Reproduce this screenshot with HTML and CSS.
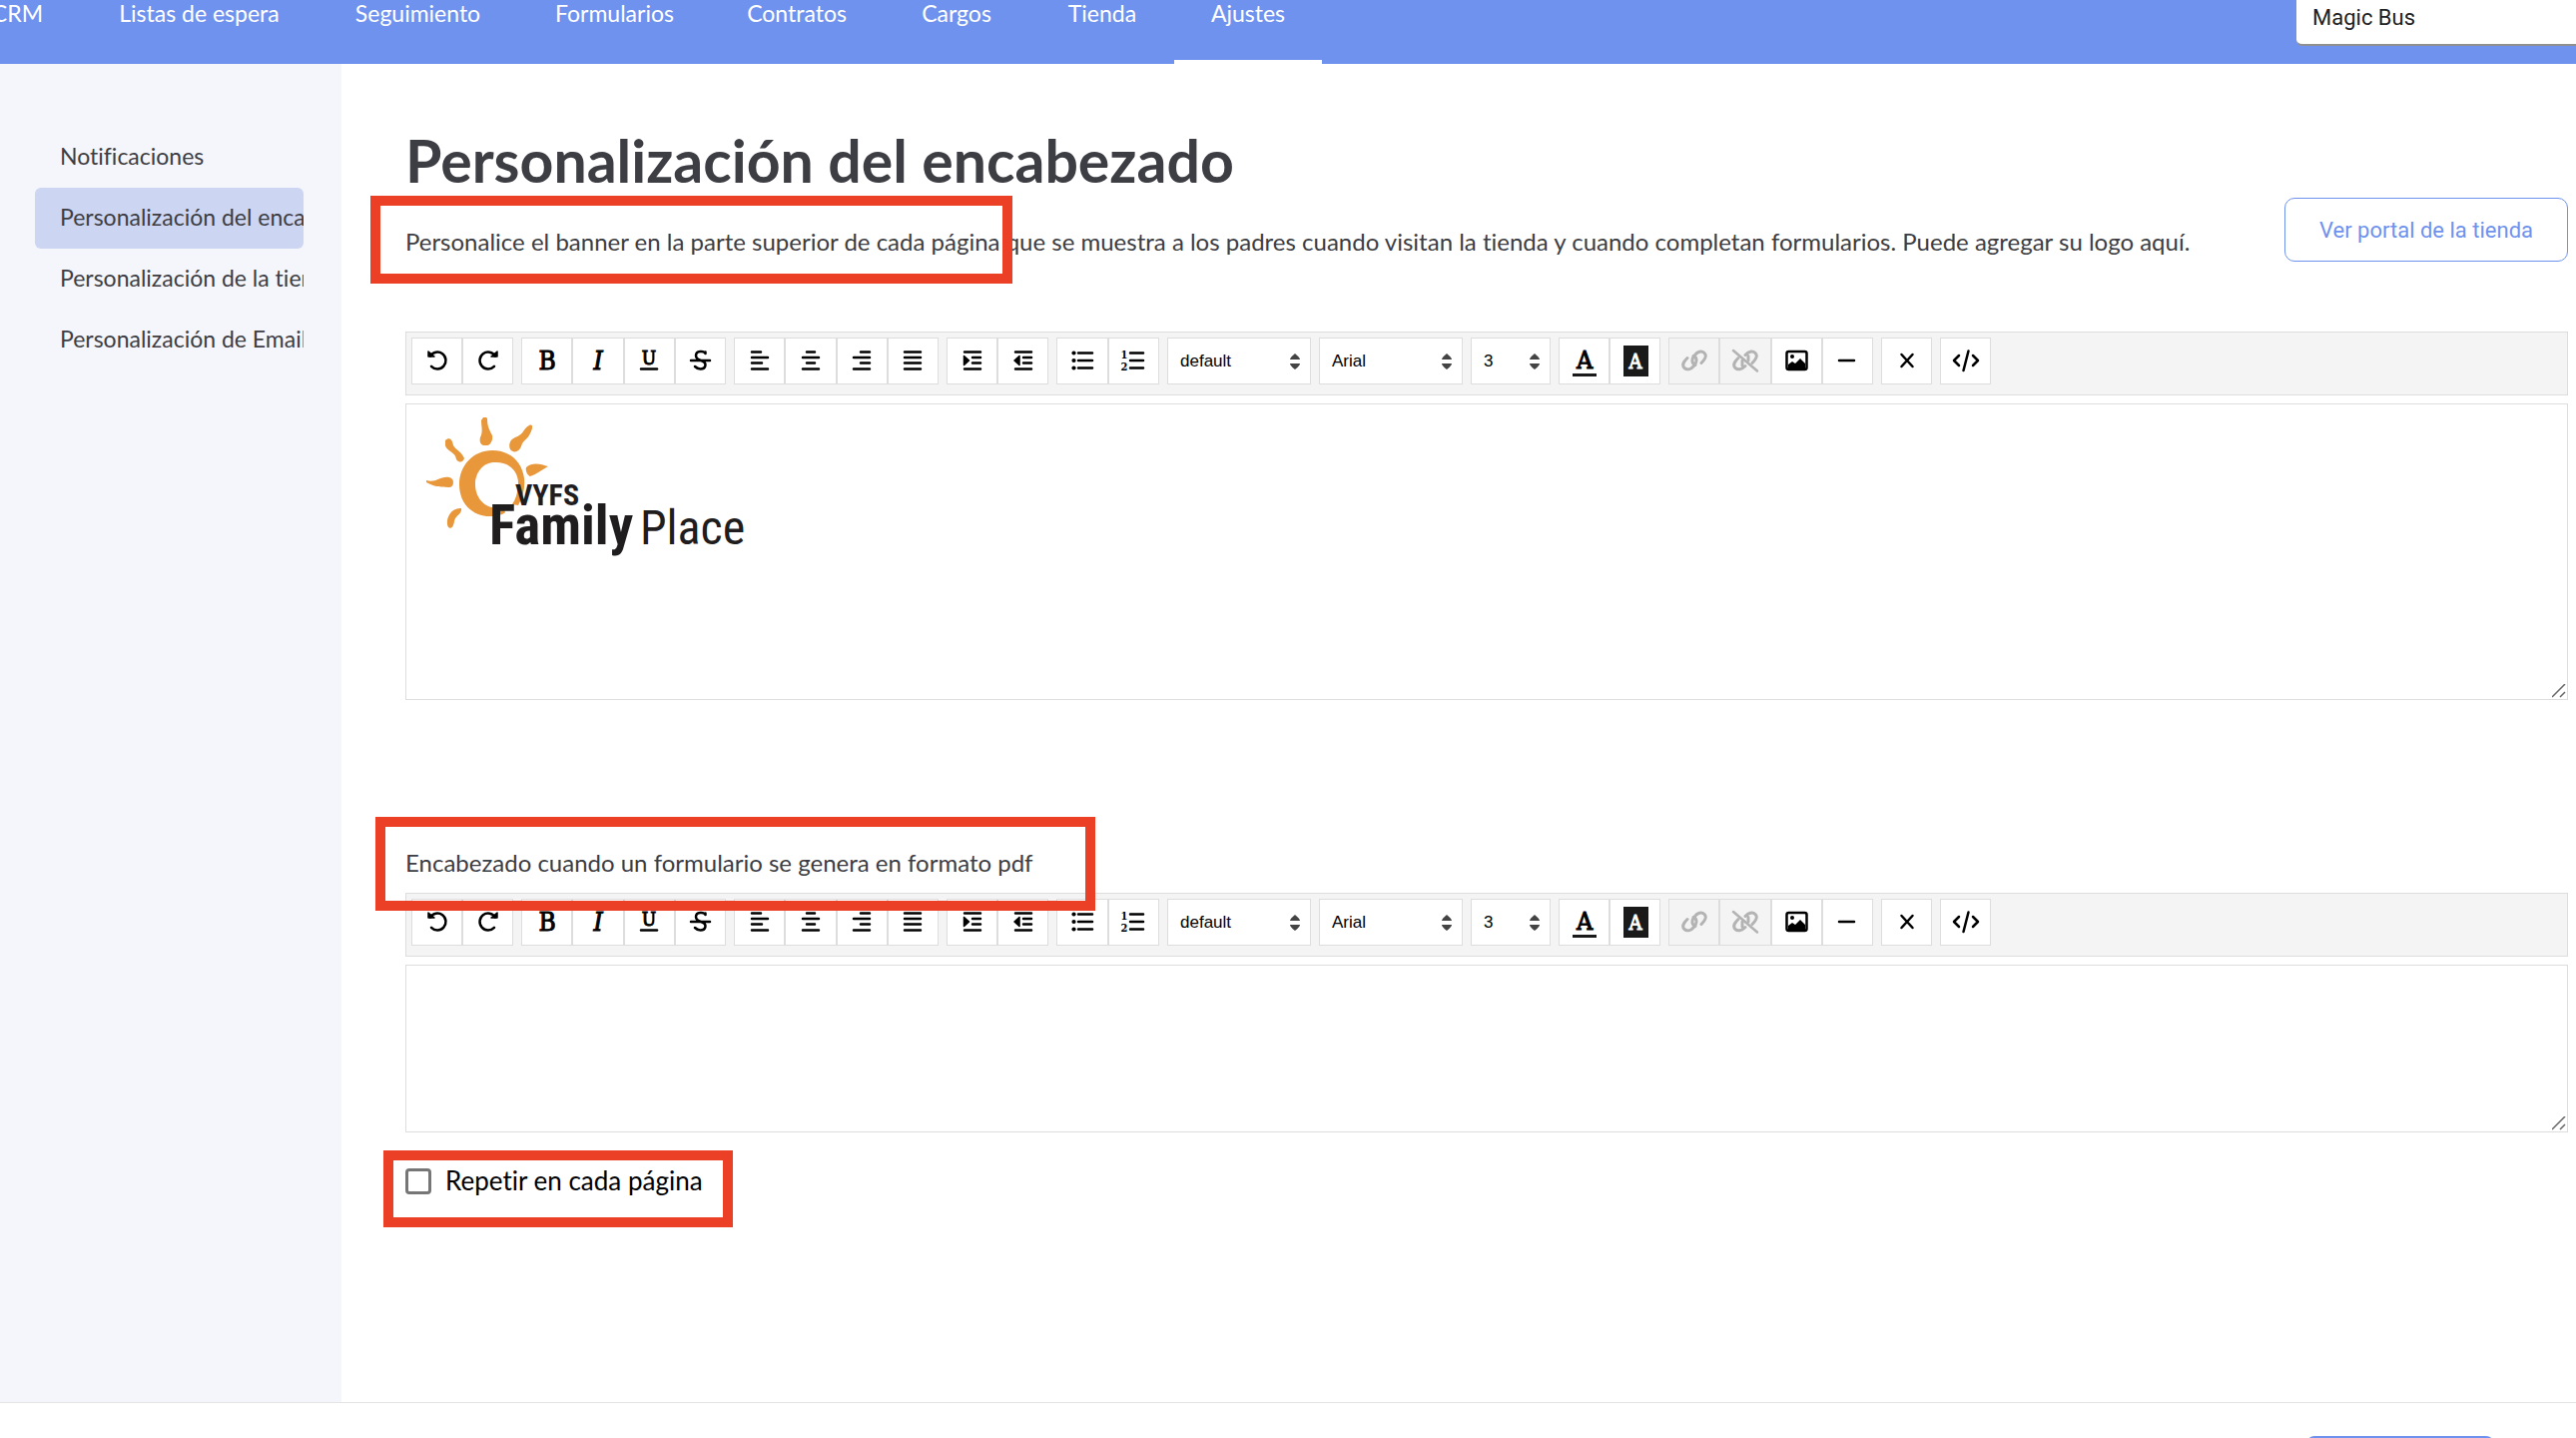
FILE: index.html
```html
<!DOCTYPE html>
<html lang="es">
<head>
<meta charset="utf-8">
<meta name="viewport" content="width=device-width, initial-scale=1">
<title>Personalización del encabezado</title>
<link rel="stylesheet" href="styles.css">
</head>
<body>
<svg class="sprite" aria-hidden="true">
  <symbol id="i-undo" viewBox="0 0 30 34"><path d="M8 12.500A8.400 8.400 0 1 1 9 22.800" class="ln"/><path d="M6 8v5h6z" class="fl"/></symbol>
  <symbol id="i-redo" viewBox="0 0 30 34"><path d="M22 12.500A8.400 8.400 0 1 0 21 22.800" class="ln"/><path d="M24 8v5h-6z" class="fl"/></symbol>
  <symbol id="i-bold" viewBox="0 0 30 34"><text x="15" y="26" class="glyph" font-size="26">B</text></symbol>
  <symbol id="i-italic" viewBox="0 0 30 34"><text x="15" y="26" class="glyph glyph-it" font-size="26">I</text></symbol>
  <symbol id="i-under" viewBox="0 0 30 34"><text x="15" y="21" class="glyph" font-size="19">U</text><path d="M7 25.500h16" class="ln"/></symbol>
  <symbol id="i-strike" viewBox="0 0 30 34"><path d="M20.500 10V8.500M20.500 10C19 7 11 7 11 12C11 14.500 13 16 16 17C23 19 21 25.500 15.500 25.500C12.500 25.500 11 24 10 23M6 17h19" class="ln"/></symbol>
  <symbol id="i-left" viewBox="0 0 30 34"><path d="M7 8.500h9M7 14h16M7 19.500h10M7 25.500h16" class="ln"/></symbol>
  <symbol id="i-center" viewBox="0 0 30 34"><path d="M11 8.500h8M7 14h16M11 19.500h8M7 25.500h16" class="ln"/></symbol>
  <symbol id="i-right" viewBox="0 0 30 34"><path d="M14 8.500h9M7 14h16M14 19.500h9M7 25.500h16" class="ln"/></symbol>
  <symbol id="i-justify" viewBox="0 0 30 34"><path d="M7 8.500h16M7 14h16M7 19.500h16M7 25.500h16" class="ln"/></symbol>
  <symbol id="i-indent" viewBox="0 0 30 34"><path d="M7 8.500h16M15 14h8M15 19.500h8M7 25.500h16" class="ln"/><path d="M6.500 12.500v9l5-4.500z" class="fl"/></symbol>
  <symbol id="i-outdent" viewBox="0 0 30 34"><path d="M7 8.500h16M15 14h8M15 19.500h8M7 25.500h16" class="ln"/><path d="M11 12.500v9l-5-4.500z" class="fl"/></symbol>
  <symbol id="i-ul" viewBox="0 0 30 34"><path d="M11 9.500h14M11 17h14M11 24.500h14" class="ln"/><circle cx="6.500" cy="9.500" r="2.100"/><circle cx="6.500" cy="17" r="2.100"/><circle cx="6.500" cy="24.500" r="2.100"/></symbol>
  <symbol id="i-ol" viewBox="0 0 30 34"><path d="M12 9.500h13M12 17h13M12 24.500h13" class="ln"/><text x="6" y="15" class="num">1</text><text x="6" y="27" class="num">2</text></symbol>
  <symbol id="i-color" viewBox="0 0 30 34"><text x="15" y="25" class="glyph" font-size="25">A</text><path d="M3 30h24v3H3z" fill="#1a1a1a"/></symbol>
  <symbol id="i-fill" viewBox="0 0 30 34"><path d="M3 2h25v31H3z" fill="#1a1a1a"/><text x="15" y="25" class="glyph glyph-inv" font-size="20">A</text></symbol>
  <symbol id="i-link" viewBox="0 0 30 34"><path d="M16 21.500C11.500 20 12.500 14.500 15.500 11.500C18 8.500 22 6.500 25 9.500C28 12.500 25.500 16 22 19.500M14 12.500C18.500 14 17.500 19.500 14.500 22.500C12 25.500 8 27 5 24.500C2 21.500 4.500 18 8 14.500" class="ln ln-bold"/></symbol>
  <symbol id="i-unlink" viewBox="0 0 30 34"><path d="M15 11.500C18 8.500 22 6.500 25 9.500C28 12.500 25.500 16 22 19.500M18 12.500V17M15 22.500C12 25.500 8 27 5 24.500C2 21.500 4.500 18 8 14.500M12 17V22" class="ln ln-bold"/><path d="M3 7L27 27.500" class="ln"/></symbol>
  <symbol id="i-image" viewBox="0 0 30 34"><rect x="5.500" y="8" width="20" height="18" rx="2" class="ln"/><circle cx="11" cy="13" r="2"/><path d="M7 25v-4l4-3 3 2 5-5 5 5v5z"/></symbol>
  <symbol id="i-rule" viewBox="0 0 30 34"><path d="M7 17h15" class="ln"/></symbol>
  <symbol id="i-clear" viewBox="0 0 30 34"><path d="M9.500 11l11 12M20.500 11l-11 12" class="ln"/></symbol>
  <symbol id="i-code" viewBox="0 0 30 34"><path d="M8 12l-5 5 5 5M22 12l5 5-5 5M17.500 7.500L12.500 27" class="ln"/></symbol>
</svg>

<div class="app">
  <header class="topbar">
    <nav class="nav" aria-label="Principal">
      <a href="#" class="nav-first">CRM</a>
      <a href="#">Listas de espera</a>
      <a href="#">Seguimiento</a>
      <a href="#">Formularios</a>
      <a href="#">Contratos</a>
      <a href="#">Cargos</a>
      <a href="#">Tienda</a>
      <a href="#" class="current" aria-current="page">Ajustes</a>
    </nav>
    <select class="center-select" aria-label="Centro"><option>Magic Bus</option></select>
  </header>

  <div class="layout">
    <aside class="sidebar">
      <a href="#">Notificaciones</a>
      <a href="#" class="active">Personalización del encabezado</a>
      <a href="#">Personalización de la tienda</a>
      <a href="#">Personalización de Email</a>
    </aside>

    <main class="content">
      <h1>Personalización del encabezado</h1>
      <div class="intro">
        <p class="lead">Personalice el banner en la parte superior de cada página que se muestra a los padres cuando visitan la tienda y cuando completan formularios. Puede agregar su logo aquí.<span class="mark mark-intro"></span></p>
        <button type="button" class="outline-btn">Ver portal de la tienda</button>
      </div>

      <section class="editor">
        <div class="toolbar">
          <div class="group"><button type="button" aria-label="Deshacer"><svg><use href="#i-undo"/></svg></button><button type="button" aria-label="Rehacer"><svg><use href="#i-redo"/></svg></button></div>
          <div class="group"><button type="button" aria-label="Negrita"><svg><use href="#i-bold"/></svg></button><button type="button" aria-label="Cursiva"><svg><use href="#i-italic"/></svg></button><button type="button" aria-label="Subrayado"><svg><use href="#i-under"/></svg></button><button type="button" aria-label="Tachado"><svg><use href="#i-strike"/></svg></button></div>
          <div class="group"><button type="button" aria-label="Alinear a la izquierda"><svg><use href="#i-left"/></svg></button><button type="button" aria-label="Centrar"><svg><use href="#i-center"/></svg></button><button type="button" aria-label="Alinear a la derecha"><svg><use href="#i-right"/></svg></button><button type="button" aria-label="Justificar"><svg><use href="#i-justify"/></svg></button></div>
          <div class="group"><button type="button" aria-label="Aumentar sangría"><svg><use href="#i-indent"/></svg></button><button type="button" aria-label="Reducir sangría"><svg><use href="#i-outdent"/></svg></button></div>
          <div class="group"><button type="button" aria-label="Lista con viñetas"><svg><use href="#i-ul"/></svg></button><button type="button" aria-label="Lista numerada"><svg><use href="#i-ol"/></svg></button></div>
          <select aria-label="Estilo"><option>default</option></select>
          <select aria-label="Fuente"><option>Arial</option></select>
          <select aria-label="Tamaño"><option>3</option></select>
          <div class="group"><button type="button" aria-label="Color de texto"><svg><use href="#i-color"/></svg></button><button type="button" aria-label="Color de fondo"><svg><use href="#i-fill"/></svg></button></div>
          <div class="group"><button type="button" aria-label="Enlace" disabled><svg><use href="#i-link"/></svg></button><button type="button" aria-label="Quitar enlace" disabled><svg><use href="#i-unlink"/></svg></button><button type="button" aria-label="Imagen"><svg><use href="#i-image"/></svg></button><button type="button" aria-label="Línea horizontal"><svg><use href="#i-rule"/></svg></button></div>
          <div class="group"><button type="button" aria-label="Borrar formato"><svg><use href="#i-clear"/></svg></button></div>
          <div class="group"><button type="button" aria-label="Código"><svg><use href="#i-code"/></svg></button></div>
        </div>
        <div class="canvas canvas-tall" contenteditable="true" spellcheck="false" role="textbox" aria-label="Encabezado"><svg class="logo" viewBox="0 0 322 142" role="img" aria-label="VYFS Family Place">
          <g fill="#e8983a">
            <path fill-rule="evenodd" d="M92 88C97 80 99 70 98 61C96 44 83 33 66 33C47 33 33 48 33 67C33 87 47 100 66 99C72 98 78 97 79 95L77 90C62 94 49 83 49 67C49 54 58 44 70 45C84 45 93 55 92 68Q91 80 86 87Z"/>
            <path d="M55 3Q58-3 61 1C61 9 63 12 66 18C67 23 64 29 59 28C54 28 53 24 54 20C57 14 55 9 55 3Z"/>
            <path d="M103 8C107 6 107 11 104 16C101 23 97 22 95 29C93 35 87 36 84 32C82 27 84 22 89 20C98 17 97 11 103 8Z"/>
            <path d="M19 23C23 19 26 22 27 28C29 32 36 35 38 41C37 45 33 46 30 42C29 34 20 34 19 28Z"/>
            <path d="M0 63C10 66 14 58 23 60C29 61 28 71 22 70C14 69 12 71 0 65Z"/>
            <path d="M100 50C107 44 115 47 122 49C115 53 110 57 104 59C101 58 99 53 100 50Z"/>
            <path d="M35 91C36 97 29 98 28 104C27 112 22 113 21 107C20 99 26 90 35 91Z"/>
          </g>
          <g fill="#1f1d1e">
            <text x="89" y="88" class="logo-top">VYFS</text>
            <text x="63" y="127" class="logo-bold">Family</text>
            <text x="214" y="127" class="logo-thin">Place</text>
          </g>
        </svg></div>
      </section>

      <section class="editor editor-pdf">
        <label class="lead pdf-label" for="pdf-header">Encabezado cuando un formulario se genera en formato pdf<span class="mark mark-pdf"></span></label>
        <div class="toolbar">
          <div class="group"><button type="button" aria-label="Deshacer"><svg><use href="#i-undo"/></svg></button><button type="button" aria-label="Rehacer"><svg><use href="#i-redo"/></svg></button></div>
          <div class="group"><button type="button" aria-label="Negrita"><svg><use href="#i-bold"/></svg></button><button type="button" aria-label="Cursiva"><svg><use href="#i-italic"/></svg></button><button type="button" aria-label="Subrayado"><svg><use href="#i-under"/></svg></button><button type="button" aria-label="Tachado"><svg><use href="#i-strike"/></svg></button></div>
          <div class="group"><button type="button" aria-label="Alinear a la izquierda"><svg><use href="#i-left"/></svg></button><button type="button" aria-label="Centrar"><svg><use href="#i-center"/></svg></button><button type="button" aria-label="Alinear a la derecha"><svg><use href="#i-right"/></svg></button><button type="button" aria-label="Justificar"><svg><use href="#i-justify"/></svg></button></div>
          <div class="group"><button type="button" aria-label="Aumentar sangría"><svg><use href="#i-indent"/></svg></button><button type="button" aria-label="Reducir sangría"><svg><use href="#i-outdent"/></svg></button></div>
          <div class="group"><button type="button" aria-label="Lista con viñetas"><svg><use href="#i-ul"/></svg></button><button type="button" aria-label="Lista numerada"><svg><use href="#i-ol"/></svg></button></div>
          <select aria-label="Estilo"><option>default</option></select>
          <select aria-label="Fuente"><option>Arial</option></select>
          <select aria-label="Tamaño"><option>3</option></select>
          <div class="group"><button type="button" aria-label="Color de texto"><svg><use href="#i-color"/></svg></button><button type="button" aria-label="Color de fondo"><svg><use href="#i-fill"/></svg></button></div>
          <div class="group"><button type="button" aria-label="Enlace" disabled><svg><use href="#i-link"/></svg></button><button type="button" aria-label="Quitar enlace" disabled><svg><use href="#i-unlink"/></svg></button><button type="button" aria-label="Imagen"><svg><use href="#i-image"/></svg></button><button type="button" aria-label="Línea horizontal"><svg><use href="#i-rule"/></svg></button></div>
          <div class="group"><button type="button" aria-label="Borrar formato"><svg><use href="#i-clear"/></svg></button></div>
          <div class="group"><button type="button" aria-label="Código"><svg><use href="#i-code"/></svg></button></div>
        </div>
        <textarea class="canvas canvas-short" id="pdf-header"></textarea>
      </section>

      <div class="repeat">
        <input type="checkbox" id="repeat">
        <label for="repeat">Repetir en cada página</label>
        <span class="mark mark-repeat"></span>
      </div>
    </main>
  </div>

  <footer class="footer"><button type="submit" class="save-btn" aria-label="Guardar"></button></footer>
</div>
</body>
</html>
```
FILE: styles.css
```css
* { box-sizing: border-box; }
body {
  margin: 0;
  font-family: Lato, "Open Sans", sans-serif;
  font-size: 24px;
  font-variant-ligatures: none;
  color: #3d3d44;
  background: #fff;
}
a { color: inherit; text-decoration: none; }
button, select, textarea { font: inherit; margin: 0; }
.sprite { display: none; }

.app {
  display: flex;
  flex-direction: column;
  height: 100vh;
  overflow: hidden;
}

/* Top bar */
.topbar {
  flex: none;
  display: flex;
  justify-content: space-between;
  align-items: flex-start;
  height: 64px;
  background: #6f92ee;
}
.nav {
  display: grid;
  grid-template-columns: 81px 237px 201px 193px 172px 148px 144px 148px;
  height: 64px;
  font-size: 23px;
  line-height: 26px;
  color: #fff;
  text-align: center;
}
.nav-first { display: flex; justify-content: flex-end; padding-right: 38px; }
.nav .current { border-bottom: 4px solid #fff; }
.center-select {
  width: 280px;
  height: 46px;
  padding: 0 16px 10px;
  border: 0;
  border-bottom: 2px solid #8f8f8f;
  border-radius: 0 0 0 6px;
  appearance: none;
  background: #fff;
  color: #222;
  font-family: Roboto, sans-serif;
  font-size: 22px;
}

/* Side menu */
.layout { flex: 1; display: flex; min-height: 0; }
.sidebar {
  flex: none;
  width: 342px;
  padding: 63px 38px 0 35px;
  background: #f4f6fc;
  font-size: 23px;
}
.sidebar a {
  display: block;
  height: 61px;
  padding-left: 25px;
  line-height: 59px;
  border-radius: 6px;
  overflow: hidden;
  white-space: nowrap;
}
.sidebar .active { background: #ccd5f2; }

/* Content */
.content { flex: 1; min-width: 0; padding: 66px 8px 0 64px; }
h1 { margin: 0 0 6px; font-size: 59px; line-height: 62px; font-weight: 700; }
.intro { display: flex; justify-content: space-between; align-items: flex-end; margin-bottom: 70px; }
.lead { position: relative; margin: 0; padding-bottom: 2px; font-size: 24px; line-height: 36px; white-space: nowrap; }
.outline-btn {
  flex: none;
  width: 284px;
  height: 64px;
  border: 1px solid #6f92ee;
  border-radius: 10px;
  background: #fff;
  color: #6f92ee;
  font-family: Roboto, sans-serif;
  font-size: 22px;
}

/* Editor */
.toolbar {
  display: grid;
  grid-template-columns: 102px 205px 205px 102px 103px 144px 144px 80px 102px 205px 51px 51px;
  column-gap: 8px;
  height: 64px;
  padding: 5px;
  border: 1px solid #ddd;
  background: #f4f4f4;
}
.group { display: flex; height: 47px; }
.group button {
  flex: 1;
  display: flex;
  align-items: center;
  justify-content: center;
  padding: 0 0 2px;
  border: 1px solid #ddd;
  background: #fff;
  color: #000;
}
.group button:disabled { background: #f4f4f4; color: #b3b3b3; }
.group svg { width: 30px; height: 34px; fill: currentColor; }
.ln { fill: none; stroke: currentColor; stroke-width: 2.5; stroke-linecap: round; stroke-linejoin: round; }
.ln-bold { stroke-width: 3; }
.fl { stroke: currentColor; stroke-width: 1.5; stroke-linejoin: round; }
.glyph { font-family: "DejaVu Serif Condensed", "DejaVu Serif", serif; text-anchor: middle; stroke: currentColor; stroke-width: 1; }
.glyph-it { font-style: italic; }
.glyph-inv { fill: #fff; stroke: #fff; }
.num { font-family: "DejaVu Serif Condensed", "DejaVu Serif", serif; font-size: 11px; font-weight: 700; text-anchor: middle; }
.toolbar select {
  height: 47px;
  padding: 0 12px;
  border: 1px solid #ddd;
  border-radius: 0;
  appearance: none;
  color: #000;
  font-family: "Liberation Sans", sans-serif;
  font-size: 17px;
  background: #fff url("data:image/svg+xml,%3Csvg xmlns='http://www.w3.org/2000/svg' width='10' height='16'%3E%3Cpath d='M0 6Q0 4 5 0Q10 4 10 6zM0 10h10Q10 12 5 16Q0 12 0 10z' fill='%23444'/%3E%3C/svg%3E") no-repeat right 10px center;
}
.canvas {
  display: block;
  width: 100%;
  margin-top: 8px;
  padding: 13px 20px;
  border: 1px solid #ddd;
  background: #fff;
  overflow: auto;
  resize: vertical;
  outline: none;
}
.canvas::-webkit-resizer {
  background: #fff url("data:image/svg+xml,%3Csvg xmlns='http://www.w3.org/2000/svg' width='15' height='15'%3E%3Cpath d='M0 13L13 0M8 13L13 8' stroke='%23666' stroke-width='1.500' fill='none'/%3E%3C/svg%3E") no-repeat;
}
.canvas-tall { height: 297px; }
.canvas-short { height: 168px; }
.logo { display: block; width: 322px; height: 142px; }
.logo-top { font: 700 30px "Roboto Condensed", Roboto, sans-serif; }
.logo-bold { font: 700 55px "Roboto Condensed", Roboto, sans-serif; }
.logo-thin { font: 400 48px "Roboto Condensed", Roboto, sans-serif; }

.editor-pdf { margin-top: 145px; }
.pdf-label { display: block; margin-bottom: 10px; }

.repeat {
  position: relative;
  display: flex;
  align-items: center;
  gap: 14px;
  margin-top: 30px;
  font-size: 26px;
  line-height: 38px;
  color: #000;
}
.repeat input {
  width: 26px;
  height: 26px;
  margin: 0;
  border: 3px solid #767676;
  border-radius: 4px;
  appearance: none;
  background: #fff;
}
.repeat label { padding-bottom: 2px; line-height: 36px; }

/* Red highlight frames over the page */
.mark { position: absolute; border: 10px solid #eb4026; pointer-events: none; z-index: 1; }
.mark-intro { left: -35px; top: -28px; width: 643px; height: 88px; }
.mark-pdf { left: -30px; top: -28px; width: 721px; height: 94px; }
.mark-repeat { left: -22px; top: -12px; width: 350px; height: 77px; }

.footer {
  flex: none;
  display: flex;
  justify-content: flex-end;
  height: 36px;
  padding: 33px 82px 0 0;
  border-top: 1px solid #e4e4e4;
  overflow: hidden;
}
.save-btn { flex: none; width: 188px; height: 60px; border: 0; border-radius: 8px; background: #6f92ee; }
```
